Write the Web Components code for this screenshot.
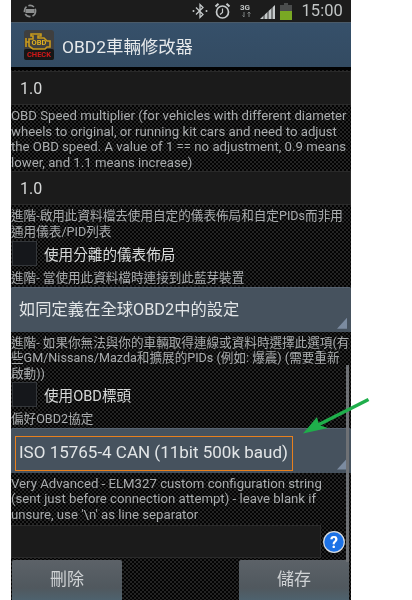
<!DOCTYPE html>
<html><head><meta charset="utf-8"><style>
html,body{margin:0;padding:0;background:#fff;height:600px;overflow:hidden}
body{font-family:Roboto,"Noto Sans CJK TC",sans-serif}
</style></head><body>
<obd-app>
<obd-status slot="top"></obd-status>
<obd-bar slot="top">OBD2車輛修改器</obd-bar>
<obd-input value="1.0"></obd-input>
<obd-note>OBD Speed multiplier (for vehicles with different diameter<br>wheels to original, or running kit cars and need to adjust<br>the OBD speed. A value of 1 == no adjustment, 0.9 means<br>lower, and 1.1 means increase)</obd-note>
<obd-input value="1.0"></obd-input>
<obd-note style="font-size:12.6px">進階-啟用此資料檔去使用自定的儀表佈局和自定PIDs而非用<br>通用儀表/PID列表</obd-note>
<obd-check>使用分離的儀表佈局</obd-check>
<obd-note style="font-size:12.6px">進階- 當使用此資料檔時連接到此藍芽裝置</obd-note>
<obd-select style="font-size:16.3px">如同定義在全球OBD2中的設定</obd-select>
<obd-note style="font-size:12.6px;padding-bottom:0">進階- 如果你無法與你的車輛取得連線或資料時選擇此選項(有<br>些GM/Nissans/Mazda和擴展的PIDs (例如: 爆震) (需要重新<br>啟動))</obd-note>
<obd-check>使用OBD標頭</obd-check>
<obd-note style="font-size:12.6px">偏好OBD2協定</obd-note>
<obd-select marked>ISO 15765-4 CAN (11bit 500k baud)</obd-select>
<obd-note style="padding-bottom:3px">Very Advanced - ELM327 custom configuration string<br>(sent just before connection attempt) - leave blank if<br>unsure, use '\n' as line separator</obd-note>
<obd-help-row></obd-help-row>
<obd-actions></obd-actions>
</obd-app>
<script>
function def(name,css,html){
  customElements.define(name,class extends HTMLElement{
    connectedCallback(){
      if(this.shadowRoot)return;
      const r=this.attachShadow({mode:'open'});
      r.innerHTML='<style>'+css+'</style>'+(typeof html==='function'?html(this):html);
    }
  });
}
def('obd-app',`
:host{display:block;width:412px;height:600px;overflow:hidden;position:relative;background:#fff}
.screen{width:340px;margin-left:11px;height:600px;display:flex;flex-direction:column;position:relative;overflow:hidden;background:#000;filter:blur(.35px)}
.content{flex:1;display:flex;flex-direction:column;min-height:0;padding-top:1px;
 background-color:#030303;
 background-image:radial-gradient(circle at 2px 2px,#232323 0 1px,transparent 1.4px),radial-gradient(circle at 2px 2px,#232323 0 1px,transparent 1.4px);
 background-size:4px 4px;background-position:0 0,2px 2px}
.scroll{position:absolute;left:335px;top:365px;width:3px;height:197px;background:#6e7175}
.arrow{position:absolute;left:295px;top:392px}
`,`<div class="screen"><slot name="top"></slot><div class="content"><slot></slot></div><div class="scroll"></div></div>
<svg class="arrow" width="84" height="50" viewBox="0 0 84 50"><path d="M73.5 7.5 L23 33" stroke="#1fae4b" stroke-width="3.6" fill="none"/><path d="M8 41.5 L33 36 L24 33 L22 25 Z" fill="#1fae4b"/></svg>`);
def('obd-status',`
:host{display:flex;align-items:center;height:22px;background:#1c1c1c;color:#c4c8c9;padding:0 8px 0 12px;border-bottom:1px solid #4a5a68}
.sp{flex:1}
svg{display:block}
.t{font-size:16.5px;margin-left:9px;letter-spacing:.1px;color:#c0c4c4;line-height:22px}
`,`<svg width="14" height="14" viewBox="0 0 14 14"><circle cx="7" cy="7" r="5.6" fill="none" stroke="#8d8f8f" stroke-width="1.6" stroke-dasharray="6 2"/><rect x="2.5" y="5" width="9" height="4" fill="#8d8f8f"/></svg>
<span class="sp"></span>
<svg width="16" height="18" viewBox="0 0 16 18"><path d="M4 5.5 L11 12.5 L8 15.5 V2.5 L11 5.5 L4 12.5" fill="none" stroke="#c6cacb" stroke-width="1.3"/><circle cx="1.5" cy="9" r="1" fill="#c6cacb"/><circle cx="14.5" cy="9" r="1" fill="#c6cacb"/></svg>
<svg width="17" height="18" viewBox="0 0 17 18" style="margin-left:6px"><circle cx="8.5" cy="10" r="6" fill="none" stroke="#c6cacb" stroke-width="1.7"/><path d="M8.5 6.5V10.5L6 12.5" fill="none" stroke="#c6cacb" stroke-width="1.2"/><path d="M1.5 4.5L4.5 1.8M15.5 4.5L12.5 1.8" stroke="#c6cacb" stroke-width="2"/></svg>
<svg width="14" height="18" viewBox="0 0 14 18" style="margin-left:9px"><text x="0" y="8" font-family="Roboto" font-size="8" font-weight="700" fill="#c0c4c4">3G</text><path d="M4 10v5M2.5 13.5l1.5 1.5M9 15v-5M7.5 11.5L9 10l1.5 1.5" stroke="#7d8181" stroke-width="1" fill="none"/></svg>
<svg width="16" height="14" viewBox="0 0 16 14" style="margin-left:6px;margin-top:2px"><path d="M0 14 L15 0V14Z" fill="#c6cacb"/><path d="M4 14V9M8 14V6M12 14V2" stroke="#1c1c1c" stroke-width=".9"/></svg>
<svg width="12" height="17" viewBox="0 0 12 17" style="margin-left:4px"><path d="M4 0h4v2h4v15H0V2h4z" fill="#4a4c4c"/><rect y="8" width="12" height="9" fill="#79a824"/></svg>
<span class="t">15:00</span>`);
def('obd-bar',`
:host{display:flex;align-items:center;height:44px;background:linear-gradient(#36506a,#334b62);color:#e6e9eb;font-size:17.4px;padding-left:13px;gap:8px;border-bottom:3px solid #020202}
svg{display:block}
`,`<svg width="30" height="30" viewBox="0 0 30 30"><rect width="30" height="30" rx="3" fill="#3f3f3f"/><rect y="19" width="30" height="11" rx="2" fill="#161616"/><path d="M2 8v9M2 12h3M5 9h4V6h-2V4h10v2h-3v2h6l3 3h3v6h-3l-2 2H9l-4-3z" fill="none" stroke="#c99a1c" stroke-width="1.6"/><text x="15" y="15" text-anchor="middle" font-family="Roboto" font-size="7.5" font-weight="700" fill="#e0b020">OBD</text><text x="15" y="27" text-anchor="middle" font-family="Roboto" font-size="7.5" font-weight="700" fill="#d01818">CHECK</text></svg><slot></slot>`);
def('obd-input',`
:host{display:block;height:34px;background:#1b1b1b;box-shadow:inset 0 0 0 1px #2a2a2a;color:#d6d8d8;font-size:16px;line-height:36px;padding-left:9px;box-sizing:border-box}
`,t=>t.getAttribute('value'));
def('obd-note',`
:host{display:block;font-size:13.2px;line-height:15.5px;color:#a9acae;padding:3px 0 1px 0;white-space:nowrap}
`,`<slot></slot>`);
def('obd-check',`
:host{display:flex;align-items:center;height:27.5px;gap:7px;color:#d6d8d8;font-size:14.6px;padding-left:1px}
.b{width:25px;height:25px;box-sizing:border-box;background:#15171b;border:1px solid #33363a;flex:none}
`,`<div class="b"></div><slot></slot>`);
def('obd-select',`
:host{display:block;height:45px;background:#46525e;box-shadow:inset 0 1px 0 #566270;border-radius:2px 2px 0 0;color:#e2e5e7;font-size:17px;position:relative;box-sizing:border-box;padding:0 0 0 8px;line-height:45px}
.tri{position:absolute;right:4px;bottom:3px;width:10px;height:11px;background:#7b8ba0;clip-path:polygon(100% 0,100% 100%,0 100%)}
.m{display:block;line-height:30px;height:35px;padding:0 0 0 3px;margin-left:-4px;border:1.5px solid #e8801e;box-sizing:border-box;width:278px;white-space:nowrap}
:host([marked]){padding-top:8px}
`,t=>(t.hasAttribute('marked')?'<span class="m"><slot></slot></span>':'<slot></slot>')+'<div class="tri"></div>');
def('obd-help-row',`
:host{display:flex;align-items:center;height:33px}
.f{width:310px;height:33px;background:#1b1b1b;box-shadow:inset 0 0 0 1px #2a2a2a}
svg{margin-left:2px;display:block}
`,`<div class="f"></div><svg width="22" height="22" viewBox="0 0 22 22"><circle cx="11" cy="11" r="10.3" fill="#1c72e6" stroke="#d8dde2" stroke-width="1.2"/><text x="11" y="16.5" text-anchor="middle" font-family="Roboto" font-size="16" font-weight="700" fill="#fff">?</text></svg>`);
def('obd-btn',`:host{display:block;width:110px;height:40px;background:linear-gradient(#5c6268,#50585e 70%,#4e626e);border-radius:2px 2px 0 0;color:#cfd2d4;font-size:17px;text-align:center;line-height:38px}`,`<slot></slot>`);
def('obd-actions',`
:host{display:flex;justify-content:space-between;padding:2px 2px 0 1px}
`,`<obd-btn>刪除</obd-btn><obd-btn>儲存</obd-btn>`);
</script>
</body></html>
